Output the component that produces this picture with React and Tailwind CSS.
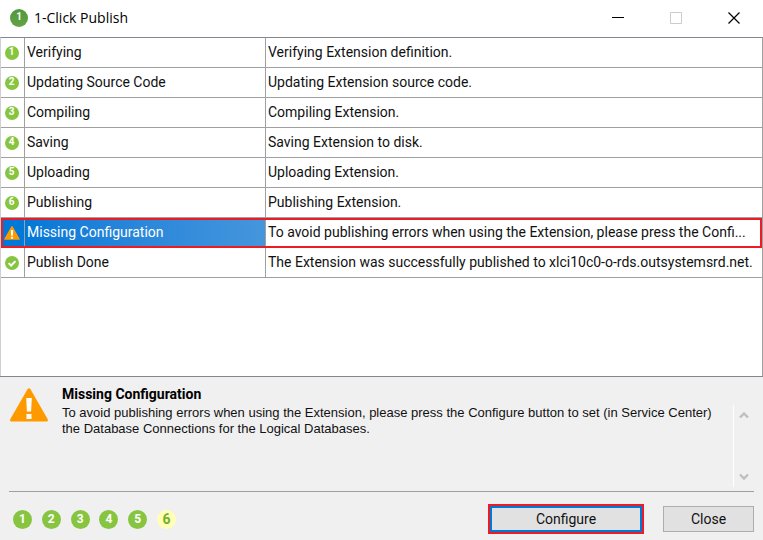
import clsx from 'clsx';

const rows = [
  { icon: '1', step: 'Verifying', detail: 'Verifying Extension definition.' },
  { icon: '2', step: 'Updating Source Code', detail: 'Updating Extension source code.' },
  { icon: '3', step: 'Compiling', detail: 'Compiling Extension.' },
  { icon: '4', step: 'Saving', detail: 'Saving Extension to disk.' },
  { icon: '5', step: 'Uploading', detail: 'Uploading Extension.' },
  { icon: '6', step: 'Publishing', detail: 'Publishing Extension.' },
  {
    icon: 'warning',
    step: 'Missing Configuration',
    detail: 'To avoid publishing errors when using the Extension, please press the Confi...',
    selected: true,
  },
  { icon: 'done', step: 'Publish Done', detail: 'The Extension was successfully published to xlci10c0-o-rds.outsystemsrd.net.' },
];

const Warning = ({ className }) => (
  <svg viewBox="0 0 38 34" className={className} aria-hidden="true">
    <path d="M17.5 1.2Q19 -0.6 20.5 1.2L37.6 31Q38.4 33.5 36.5 33.5H1.5Q-0.4 33.5 0.4 31Z" fill="#ff9900" />
    <path d="M16.2 10h5.6l-.7 13.5h-4.2zM16.5 26h5v5h-5z" fill="#fff" />
  </svg>
);

const Done = () => (
  <svg viewBox="0 0 14 14" className="size-3.5" aria-hidden="true">
    <circle cx="7" cy="7" r="7" fill="#87c540" />
    <path d="M3.6 7.1l2.5 2.4 4.4-4.4" fill="none" stroke="#fff" strokeWidth="2" />
  </svg>
);

const Dot = ({ children, className }) => (
  <span className={clsx('flex items-center justify-center rounded-full font-bold', className)}>{children}</span>
);

const RowIcon = ({ icon }) => {
  if (icon === 'warning') return <Warning className="h-3.5 w-4" />;
  if (icon === 'done') return <Done />;
  return <Dot className="size-3.5 bg-[#87c540] text-[10px] text-white">{icon}</Dot>;
};

export default function App() {
  return (
    <div className="flex min-h-screen flex-col bg-white font-['Roboto',sans-serif] text-sm text-[#111]">
      {/* Title bar */}
      <header className="flex h-[37px] items-center pb-0.5 pl-2.5">
        <Dot className="size-[18px] bg-linear-to-b from-[#4f9a3d] to-[#64a345] text-[10px] text-white">1</Dot>
        <h1 className="ml-1.5 flex-1 font-['Open_Sans',sans-serif] text-sm text-black">1-Click Publish</h1>
        <button type="button" aria-label="Minimize" className="flex h-full w-[58px] items-center justify-center">
          <svg viewBox="0 0 12 12" className="size-3"><path d="M0 5.5h12" stroke="#000" /></svg>
        </button>
        <button type="button" aria-label="Maximize" disabled className="flex h-full w-[58px] items-center justify-center">
          <svg viewBox="0 0 12 12" className="size-3"><path d="M.5.5h11v11H.5z" fill="none" stroke="#ccc" /></svg>
        </button>
        <button type="button" aria-label="Close window" className="flex h-full w-[58px] items-center justify-center">
          <svg viewBox="0 0 12 12" className="size-3"><path d="M.5.5l11 11M11.5.5l-11 11" stroke="#000" strokeWidth="1.2" /></svg>
        </button>
      </header>

      {/* Steps */}
      <main className="flex-1 border-x border-t border-t-[#82868f] border-r-[#a0a0a0] border-l-[#d0d0d4]">
        <table className="w-full table-fixed border-separate border-spacing-0">
          <colgroup>
            <col className="w-6" />
            <col className="w-[241px]" />
            <col />
          </colgroup>
          <tbody>
            {rows.map(({ icon, step, detail, selected }) => (
              <tr key={step} className={clsx('h-[30px]', selected && 'outline-2 -outline-offset-2 outline-[#ed1c24]')}>
                <td className={clsx('border-r border-b border-[#a0a0a0] p-0', selected && 'bg-[#0078d7]')}>
                  <div className="flex justify-center pr-0.5">
                    <RowIcon icon={icon} />
                  </div>
                </td>
                <td className={clsx('border-r border-b border-[#a0a0a0] pt-0 pr-0 pb-0.5 pl-0.5', selected && 'bg-linear-to-r from-[#0078d7] to-[#4496dc] text-white')}>
                  {step}
                </td>
                <td className="truncate border-b border-[#a0a0a0] pt-0 pr-2 pb-0.5 pl-0.5">{detail}</td>
              </tr>
            ))}
          </tbody>
        </table>
      </main>

      {/* Message */}
      <section className="border-t border-[#82868f] bg-[#f0f0f0] pt-2 pr-[9px] pl-[9px]">
        <div className="flex h-[107px] border-b border-[#a0a0a0]">
          <Warning className="mt-[3px] ml-px h-[34px] w-[38px] shrink-0" />
          <div className="ml-3.5 flex-1">
            <h2 className="leading-[18px] font-bold text-black">Missing Configuration</h2>
            <p className="pt-0.5 font-['Liberation_Sans',sans-serif] text-[13px] leading-4">
              To avoid publishing errors when using the Extension, please press the Configure button to set (in Service Center) the Database Connections for the Logical Databases.
            </p>
          </div>
          <div className="mt-5 mb-1 flex w-[21px] flex-col items-center justify-between border-l border-white py-1.5">
            <svg viewBox="0 0 10 8" className="h-2 w-2.5"><path d="M1 6.5l4-4 4 4" fill="none" stroke="#bfbfbf" strokeWidth="2.4" /></svg>
            <svg viewBox="0 0 10 8" className="h-2 w-2.5"><path d="M1 1.5l4 4 4-4" fill="none" stroke="#bfbfbf" strokeWidth="2.4" /></svg>
          </div>
        </div>

        {/* Footer */}
        <footer className="flex h-12 items-center justify-between pt-1.5">
          <div className="flex w-[167px] justify-between pl-1">
            {['1', '2', '3', '4', '5'].map(n => (
              <Dot key={n} className="size-[19px] bg-[#87c540] text-xs text-white">{n}</Dot>
            ))}
            <Dot className="size-[19px] bg-[#ffffb8] text-sm text-[#72b02c]">6</Dot>
          </div>
          <div className="flex items-center gap-[19px]">
            <button type="button" className="h-[30px] w-[156px] border-2 border-[#ed1c24] bg-[#e1e1e1] inset-ring-2 inset-ring-[#0078d7]">
              Configure
            </button>
            <button type="button" className="h-[26px] w-[91px] border border-[#adadad] bg-[#e1e1e1]">Close</button>
          </div>
        </footer>
      </section>
    </div>
  );
}
